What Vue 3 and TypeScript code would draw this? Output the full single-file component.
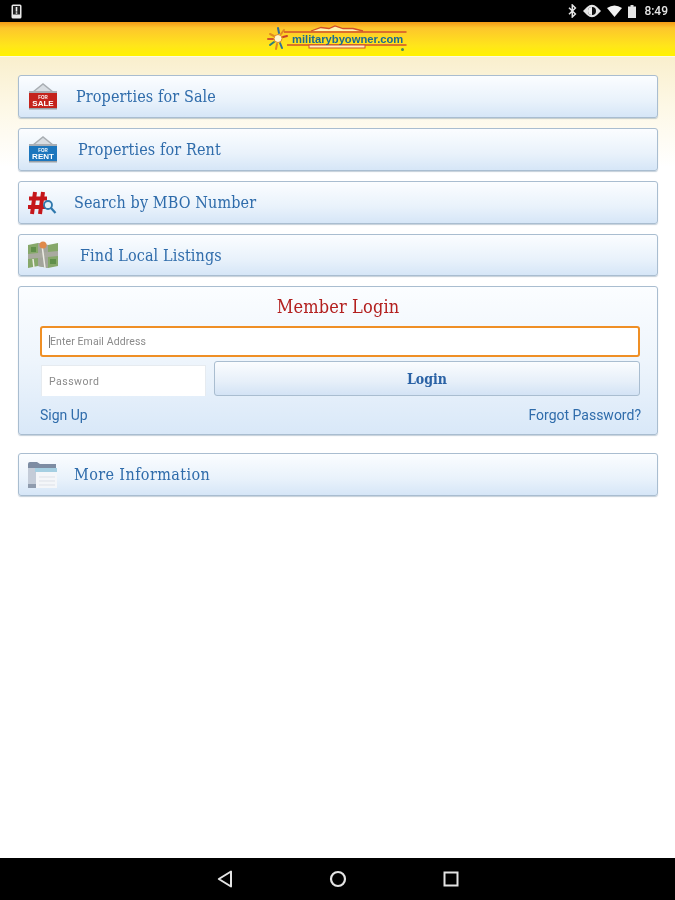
<template>
  <div class="screen">
    <div class="status-bar">
      <svg class="notify" width="11" height="15" viewBox="0 0 11 15">
        <rect x="0.5" y="0.5" width="10" height="14" rx="1.5" fill="#e8e8e8" />
        <rect x="2" y="2" width="7" height="8.5" fill="#222" />
        <rect x="4.700" y="3" width="1.6" height="4.6" fill="#eee" />
        <rect x="4.700" y="8.3" width="1.6" height="1.5" fill="#eee" />
      </svg>
      <div class="status-right">
        <svg width="9" height="14" viewBox="0 0 9 14">
          <path d="M1 3.8 7.4 10 4.3 13V1L7.4 4 1 10.2" fill="none" stroke="#e6e6e6" stroke-width="1.5" />
        </svg>
        <svg width="18" height="14" viewBox="0 0 18 14">
          <path d="M0 7 4 3Q9-1.500 14 3L18 7 14 11Q9 15.500 4 11z" fill="#e6e6e6" />
          <circle cx="9" cy="7" r="4" fill="#111" />
          <path d="M9 3a4 4 0 0 0 0 8z" fill="#eee" />
        </svg>
        <svg width="15" height="12" viewBox="0 0 15 12">
          <path d="M0 3Q7.5-2 15 3L7.5 12z" fill="#f2f2f2" />
        </svg>
        <svg width="8" height="13" viewBox="0 0 8 13">
          <rect x="2.5" y="0" width="3" height="2" fill="#ddd" />
          <rect x="0" y="1.500" width="8" height="11.5" fill="#e6e6e6" />
        </svg>
        <span class="clock">8:49</span>
      </div>
    </div>

    <header class="app-header">
      <svg class="logo" width="142" height="28" viewBox="0 0 142 28">
        <g stroke-width="2" stroke-linecap="round">
          <path d="M11 3 12 8" stroke="#2f6f9a" />
          <path d="M17 5 14 9" stroke="#e08a20" />
          <path d="M20 11 16 12" stroke="#c8402a" />
          <path d="M3 9 7 11" stroke="#e08a20" />
          <path d="M1 14 6 14" stroke="#d2562a" />
          <path d="M3 20 7 17" stroke="#2f7f7a" />
          <path d="M9 24 10 19" stroke="#e08a20" />
          <path d="M15 23 13 18" stroke="#2f6f9a" />
        </g>
        <circle cx="11" cy="13.500" r="4" fill="#fff6d0" stroke="#e08a20" />
        <path d="M17 7H139.500" stroke="#d2502a" stroke-width="1.600" />
        <path d="M20 20H139.500" stroke="#d2502a" stroke-width="1.600" />
        <path d="M44 6 54 2.500 62 3.500 68 1 76 3.500 86 3.500 96 6" fill="#fff3b0" stroke="#d2502a" stroke-width="1.300" />
        <rect x="42" y="20" width="56" height="3" fill="#fff3c0" stroke="#d2502a" />
        <text x="25" y="17.500" class="logo-text">militarybyowner.com</text>
        <circle cx="135.500" cy="24.500" r="1.500" fill="#4a8a5a" />
      </svg>
    </header>

    <main class="content">
      <a v-for="item in topItems" :key="item.label" class="menu-row" :class="item.cls">
        <span class="row-icon">
          <svg v-if="item.icon === 'sale' || item.icon === 'rent'" width="30" height="27" viewBox="0 0 30 27">
            <path d="M5 9 15 1 25 9" fill="#d8dde2" stroke="#a8adb2" stroke-width="1.500" />
            <rect x="1" y="8" width="28" height="3" fill="#a9aeb4" />
            <rect x="1" y="10" width="28" height="15" :fill="item.icon === 'sale' ? '#c4231c' : '#1c76bd'" />
            <rect x="1" y="25" width="28" height="1.500" fill="#9aa0a6" />
            <text x="15" y="15.500" class="sign-small">FOR</text>
            <text x="15" y="23" class="sign-big">{{ item.icon === 'sale' ? 'SALE' : 'RENT' }}</text>
          </svg>
          <svg v-else-if="item.icon === 'search'" width="30" height="26" viewBox="0 0 30 26">
            <path d="M7 2 4 24M15 2 12 24M1 8.500H19M0 17H18" stroke="#c5161a" stroke-width="4" fill="none" />
            <circle cx="20" cy="15" r="4" fill="#e2eef8" stroke="#2f78ad" stroke-width="1.800" />
            <path d="M23 18 27.500 23" stroke="#2f78ad" stroke-width="2.200" />
          </svg>
          <svg v-else width="30" height="28" viewBox="0 0 30 28">
            <path d="M0 4 10 2 20 4 30 2V25L20 27 10 25 0 27z" fill="#86a86a" />
            <path d="M10 2 20 4V27L10 25z" fill="#a3a59c" />
            <path d="M0 13 30 10V15L0 18z" fill="#a9aaa0" />
            <path d="M14 4 17 27M5 18 6 27" stroke="#ecece4" stroke-width="1.500" />
            <path d="M3 6H8V11H3zM22 18H28V23H22z" fill="#5f8f4a" />
            <circle cx="15" cy="4" r="3.500" fill="#e08a4a" />
          </svg>
        </span>
        <span class="row-label">{{ item.label }}</span>
      </a>

      <section class="login-card">
        <h2 class="login-title">Member Login</h2>
        <div class="email-field"><span class="caret"></span>Enter Email Address</div>
        <div class="login-line">
          <div class="password-field">Password</div>
          <button class="login-btn" type="button">Login</button>
        </div>
        <div class="login-links">
          <a>Sign Up</a>
          <a>Forgot Password?</a>
        </div>
      </section>

      <a class="menu-row more-row">
        <span class="row-icon">
          <svg width="30" height="28" viewBox="0 0 30 28">
            <path d="M0 3Q0 1 2 1H9L12 3H28V9H0z" fill="#7d8ca3" />
            <rect x="0" y="7" width="8" height="17" fill="#c4ccd8" />
            <rect x="0" y="23" width="12" height="4" fill="#8f9bad" />
            <rect x="7" y="7" width="22" height="4" fill="#a5cfe2" />
            <rect x="8" y="11" width="21" height="16" fill="#f4f6f9" />
            <path d="M11 16H27M11 20H27M11 24H27" stroke="#dde1e8" />
          </svg>
        </span>
        <span class="row-label">More Information</span>
      </a>
    </main>

    <nav class="nav-bar">
      <svg width="16" height="18" viewBox="0 0 16 18">
        <path d="M14 1.500V16.500L1.800 9z" fill="none" stroke="#e4e4e4" stroke-width="2" stroke-linejoin="round" />
      </svg>
      <svg width="18" height="18" viewBox="0 0 18 18">
        <circle cx="9" cy="9" r="7" fill="none" stroke="#e4e4e4" stroke-width="2.200" />
      </svg>
      <svg width="16" height="16" viewBox="0 0 16 16">
        <rect x="1.500" y="1.500" width="13" height="13" fill="none" stroke="#e4e4e4" stroke-width="2" />
      </svg>
    </nav>
  </div>
</template>

<script setup lang="ts">
interface MenuItem {
  label: string;
  icon: "sale" | "rent" | "search" | "map";
  cls: string;
}

const topItems: MenuItem[] = [
  { label: "Properties for Sale", icon: "sale", cls: "row-sale" },
  { label: "Properties for Rent", icon: "rent", cls: "row-rent" },
  { label: "Search by MBO Number", icon: "search", cls: "row-search" },
  { label: "Find Local Listings", icon: "map", cls: "row-map" },
];
</script>

<style>
html,
body {
  margin: 0;
  background: #fff;
}
</style>

<style scoped>
.screen {
  width: 675px;
  height: 900px;
  display: flex;
  flex-direction: column;
  overflow: hidden;
  font-family: "Roboto", "Liberation Sans", sans-serif;
  filter: blur(0.4px);
}

.status-bar {
  height: 22px;
  flex: none;
  background: #000;
  display: flex;
  align-items: center;
  justify-content: space-between;
  padding: 0 7px 0 11px;
}

.status-right {
  display: flex;
  align-items: center;
  gap: 6px;
}

.clock {
  color: #e4e4e4;
  font-size: 12px;
  font-weight: 500;
  margin-left: 2px;
}

.app-header {
  height: 34px;
  flex: none;
  background: linear-gradient(#f29a16 0, #fdc62c 6px, #ffe61a 24px, #fff200 100%);
  display: flex;
  align-items: center;
  justify-content: center;
  border-bottom: 1px solid #fffbe0;
}

.logo-text {
  font-family: "Liberation Sans", sans-serif;
  font-size: 11.200px;
  font-weight: 700;
  fill: #1a6a92;
}

.content {
  flex: 1;
  display: flex;
  flex-direction: column;
  gap: 10px;
  padding: 18px 17px 0 18px;
  background: linear-gradient(#f9efcd 0, #fdf8e6 50px, #fff 110px);
}

.menu-row {
  height: 43px;
  flex: none;
  box-sizing: border-box;
  display: flex;
  align-items: center;
  border: 1px solid #a9bdd0;
  border-radius: 3px;
  background: linear-gradient(#fbfdff, #e9f2fb 60%, #d6e6f7);
  box-shadow: 0 1px 1px rgba(90, 120, 150, 0.35);
}

.row-map {
  height: 42px;
}

.row-icon {
  display: flex;
  align-items: center;
  justify-content: center;
  width: 30px;
  flex: none;
  margin-left: 9px;
}

.row-label {
  font-family: "DejaVu Serif Condensed", "DejaVu Serif", serif;
  font-stretch: condensed;
  font-size: 16px;
  letter-spacing: 0.12px;
  color: #2f6cab;
}

.row-sale .row-label {
  margin-left: 18px;
}

.row-rent .row-label {
  margin-left: 20px;
}

.row-search .row-label {
  margin-left: 16px;
}

.row-map .row-label {
  margin-left: 22px;
}

.more-row {
  margin-top: 8px;
}

.more-row .row-label {
  margin-left: 16px;
  letter-spacing: 0.4px;
}

.sign-small {
  font-family: "Liberation Sans", sans-serif;
  font-size: 4.500px;
  font-weight: 700;
  fill: #fff;
  text-anchor: middle;
}

.sign-big {
  font-family: "Liberation Sans", sans-serif;
  font-size: 8px;
  font-weight: 700;
  fill: #fff;
  text-anchor: middle;
}

.login-card {
  height: 149px;
  flex: none;
  box-sizing: border-box;
  border: 1px solid #a9bdd0;
  border-radius: 3px;
  background: linear-gradient(#fbfdff, #eef5fc 50%, #d9e8f8);
  box-shadow: 0 1px 1px rgba(90, 120, 150, 0.35);
  padding: 0 17px 0 21px;
  display: flex;
  flex-direction: column;
}

.login-title {
  margin: 9px 0 9px;
  padding-right: 4px;
  font-family: "DejaVu Serif Condensed", "DejaVu Serif", serif;
  font-stretch: condensed;
  font-size: 18px;
  line-height: 21px;
  letter-spacing: 0.15px;
  font-weight: 400;
  color: #b3201f;
  text-align: center;
}

.email-field {
  height: 31px;
  box-sizing: border-box;
  border: 2px solid #ef8f25;
  border-radius: 3px;
  background: #fff;
  display: flex;
  align-items: center;
  padding-left: 7px;
  font-size: 10.500px;
  letter-spacing: 0.1px;
  color: #8a8a8a;
}

.caret {
  width: 1px;
  height: 13px;
  background: #777;
}

.login-line {
  display: flex;
  gap: 8px;
  margin-top: 4px;
  align-items: flex-start;
}

.password-field {
  width: 165px;
  height: 31px;
  margin-top: 4px;
  margin-left: 1px;
  box-sizing: border-box;
  background: #fff;
  border: 1px solid #e6ebf0;
  border-bottom: 0;
  display: flex;
  align-items: center;
  padding-left: 7px;
  font-size: 10.500px;
  letter-spacing: 0.5px;
  color: #8a8a8a;
}

.login-btn {
  flex: 1;
  height: 35px;
  padding: 0;
  border: 1px solid #a9bdd0;
  border-radius: 3px;
  background: linear-gradient(#fafcfe, #e6eff9 60%, #d3e3f5);
  font-family: "DejaVu Serif Condensed", "DejaVu Serif", serif;
  font-stretch: condensed;
  font-size: 14px;
  font-weight: 700;
  color: #2a62a5;
}

.login-links {
  display: flex;
  justify-content: space-between;
  margin-top: 11px;
  margin-right: -1px;
  font-size: 14px;
  line-height: 17px;
  color: #2f6cab;
}

.nav-bar {
  height: 42px;
  flex: none;
  background: #000;
  box-sizing: border-box;
  display: flex;
  align-items: center;
  justify-content: center;
  gap: 96px;
}
</style>
